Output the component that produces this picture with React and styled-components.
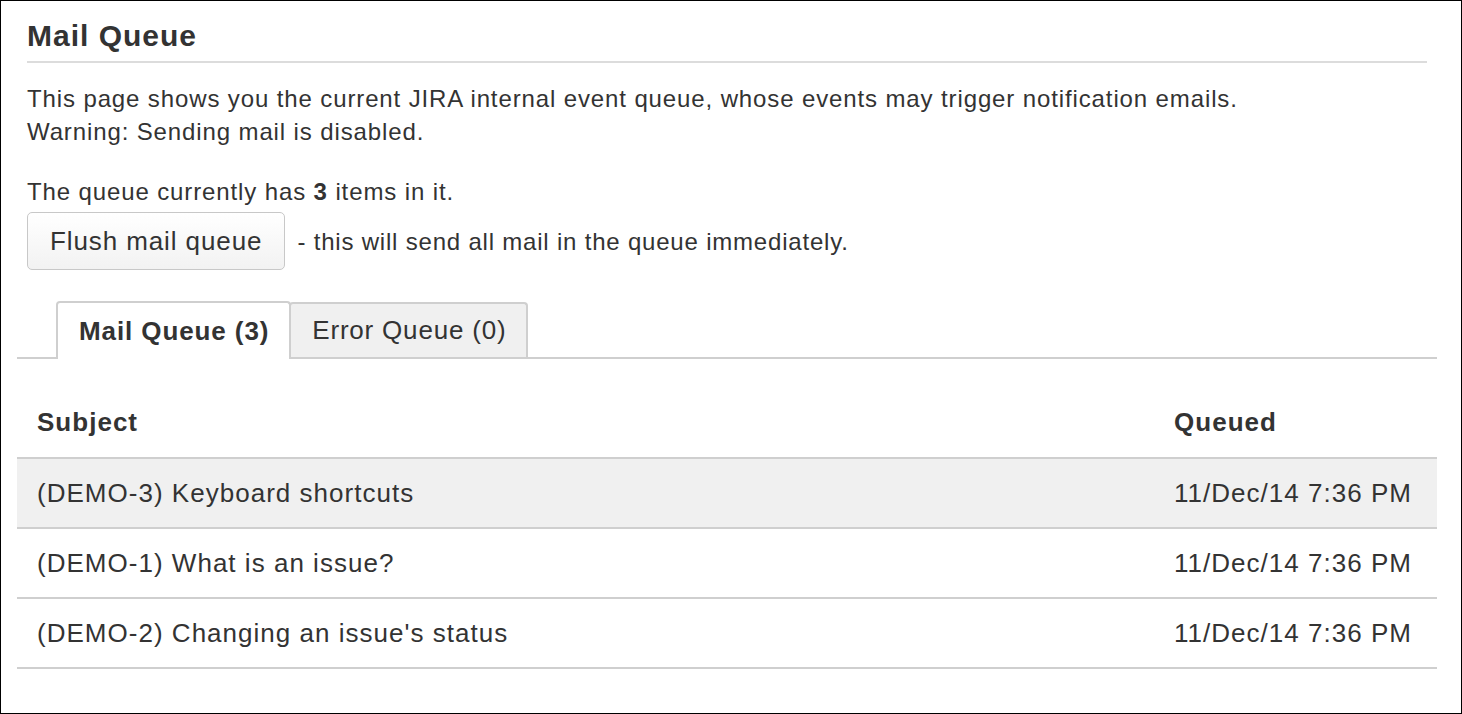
import React from "react";
import styled, { createGlobalStyle } from "styled-components";

const Global = createGlobalStyle`
  html, body { margin: 0; padding: 0; background: #fff; }
  body { font-family: "Liberation Sans", Arial, Helvetica, sans-serif; color: #333; }
  * { box-sizing: border-box; }
`;

const Frame = styled.div`
  height: 714px;
  border: 1px solid #000;
  padding: 0 24px 0 16px;
  overflow: hidden;
`;

const Header = styled.header`
  margin: 0 10px;
  padding-top: 17px;
  padding-bottom: 7px;
  border-bottom: 2px solid #dcdcdc;
`;

const Title = styled.h2`
  margin: 0;
  font-size: 30px;
  line-height: 36px;
  font-weight: bold;
  letter-spacing: 1px;
  color: #333;
`;

const Intro = styled.section`
  margin: 0 10px;
`;

const Para = styled.p`
  margin: ${(p) => p.$top}px 0 0;
  font-size: 24px;
  line-height: 33px;
  letter-spacing: 0.88px;
`;

const ActionRow = styled.div`
  display: flex;
  align-items: baseline;
  margin-top: 4px;
  font-size: 24px;
  letter-spacing: 0.8px;
`;

const Button = styled.button`
  font-family: inherit;
  color: #333;
  font-size: 26px;
  letter-spacing: 0.9px;
  height: 58px;
  padding: 0 22px;
  border: 1.5px solid #c8c8c8;
  border-radius: 5px;
  background: linear-gradient(#ffffff, #f2f2f2);
  line-height: 55px;
  cursor: pointer;
`;

const Hint = styled.span`
  margin-left: 12px;
`;

const TabList = styled.div`
  display: flex;
  align-items: flex-end;
  margin-top: 31px;
  padding-left: 39px;
  height: 58px;
  border-bottom: 2px solid #cfcfcf;
`;

const Tab = styled.div`
  display: flex;
  align-items: center;
  padding: 0 20px 0 21px;
  font-size: 26px;
  letter-spacing: ${(p) => (p.$active ? "0.9px" : "0.8px")};
  border: 2px solid #cfcfcf;
  border-bottom: none;
  border-radius: 4px 4px 0 0;
  height: ${(p) => (p.$active ? "58px" : "55px")};
  margin-bottom: ${(p) => (p.$active ? "-2px" : "0")};
  background: ${(p) => (p.$active ? "#fff" : "#f0f0f0")};
  font-weight: ${(p) => (p.$active ? "bold" : "normal")};
  & + & {
    margin-left: -2px;
  }
`;

const Table = styled.table`
  width: 100%;
  margin-top: 29px;
  border-collapse: collapse;
  font-size: 26px;
  letter-spacing: 1.02px;
`;

const HeadCell = styled.th`
  text-align: left;
  font-weight: bold;
  height: 70px;
  padding: 0 20px;
  border-bottom: 2px solid #cfcfcf;
  width: ${(p) => p.$w || "auto"};
`;

const Row = styled.tr`
  background: ${(p) => (p.$hl ? "#f0f0f0" : "#fff")};
`;

const Cell = styled.td`
  height: 70px;
  padding: 0 20px;
  border-bottom: 2px solid #cfcfcf;
  white-space: nowrap;
`;

const rows = [
  { subject: "(DEMO-3) Keyboard shortcuts", queued: "11/Dec/14 7:36 PM", hl: true },
  { subject: "(DEMO-1) What is an issue?", queued: "11/Dec/14 7:36 PM" },
  { subject: "(DEMO-2) Changing an issue's status", queued: "11/Dec/14 7:36 PM" },
];

export default function App() {
  return (
    <>
      <Global />
      <Frame>
        <Header>
          <Title>Mail Queue</Title>
        </Header>
        <Intro>
          <Para $top={19}>
            This page shows you the current JIRA internal event queue, whose events may trigger notification emails.
            <br />
            Warning: Sending mail is disabled.
          </Para>
          <Para $top={27}>
            The queue currently has <b>3</b> items in it.
          </Para>
          <ActionRow>
            <Button>Flush mail queue</Button>
            <Hint>- this will send all mail in the queue immediately.</Hint>
          </ActionRow>
        </Intro>
        <TabList>
          <Tab $active>Mail Queue (3)</Tab>
          <Tab>Error Queue (0)</Tab>
        </TabList>
        <Table>
          <thead>
            <tr>
              <HeadCell>Subject</HeadCell>
              <HeadCell $w="283px">Queued</HeadCell>
            </tr>
          </thead>
          <tbody>
            {rows.map((r, i) => (
              <Row key={i} $hl={r.hl}>
                <Cell>{r.subject}</Cell>
                <Cell>{r.queued}</Cell>
              </Row>
            ))}
          </tbody>
        </Table>
      </Frame>
    </>
  );
}
